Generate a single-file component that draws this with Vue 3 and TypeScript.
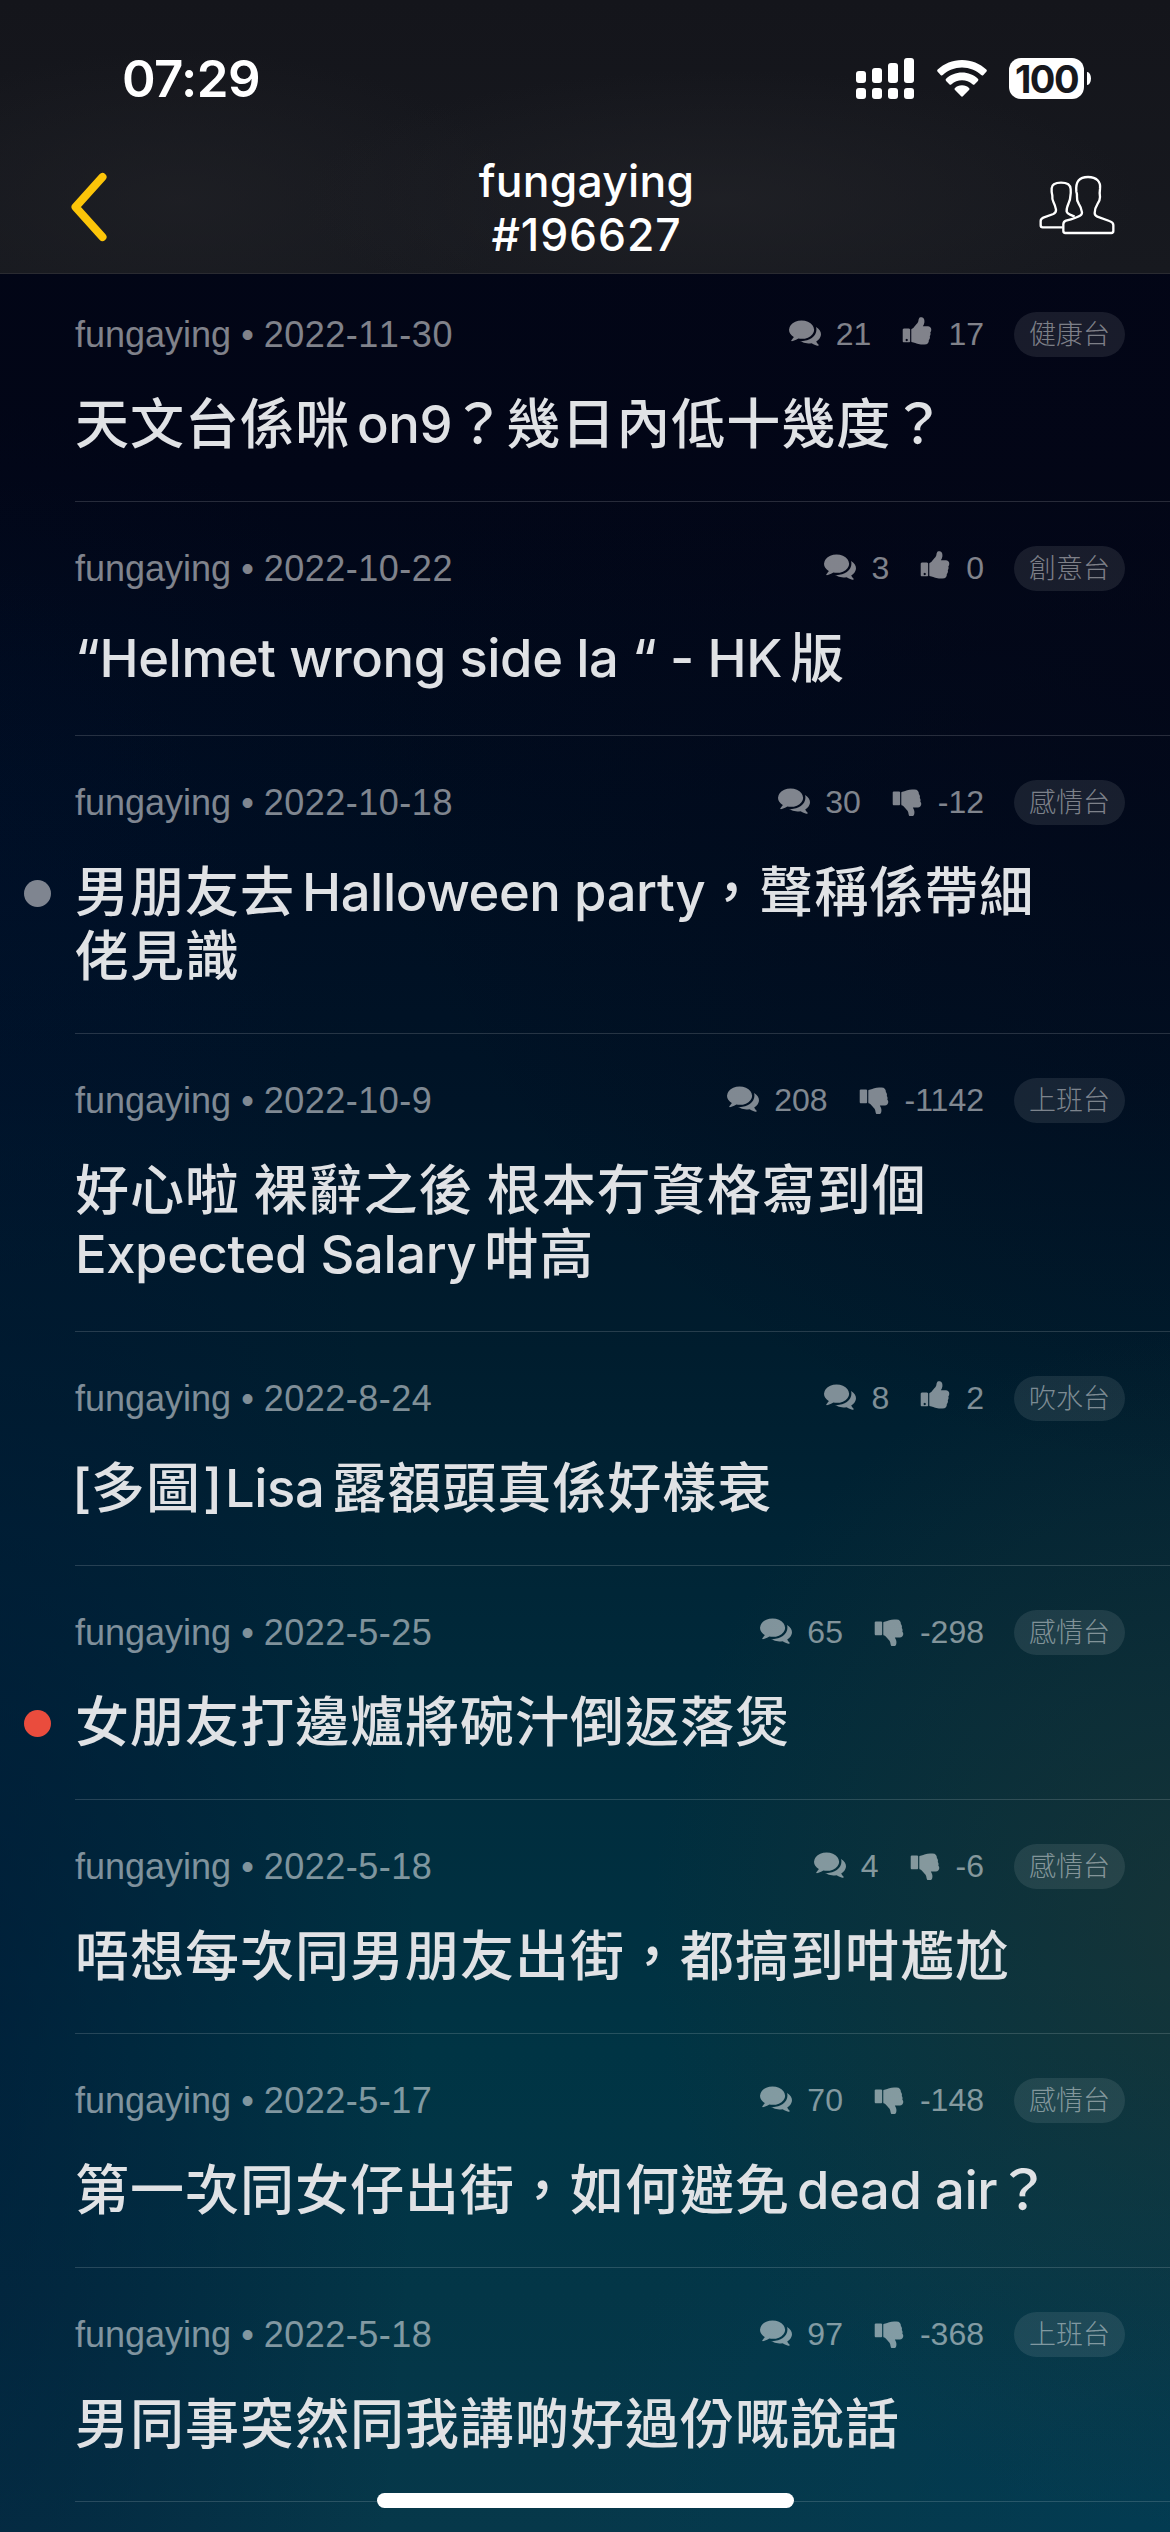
<script setup lang="ts">
type Run = { text: string; kind?: string }
interface Thread {
  date: string
  comments: number
  score: number
  up: boolean
  channel: string
  lines: Run[][]
  marker?: 'grey' | 'red'
}

const author = 'fungaying'
const cjk = (text: string): Run => ({ text })
const lat = (text: string, spacing = ''): Run => ({ text, kind: `latin ${spacing}` })

const threads: Thread[] = [
  { date: '2022-11-30', comments: 21, score: 17, up: true, channel: '健康台', lines: [[cjk('天文台係咪'), lat('on9', 'before after-punct'), cjk('？幾日內低十幾度？')]] },
  { date: '2022-10-22', comments: 3, score: 0, up: true, channel: '創意台', lines: [[lat('“Helmet wrong side la “ - HK', 'after'), cjk('版')]] },
  { date: '2022-10-18', comments: 30, score: -12, up: false, channel: '感情台', marker: 'grey', lines: [[cjk('男朋友去'), lat('Halloween party', 'before after-punct'), cjk('，聲稱係帶細')], [cjk('佬見識')]] },
  { date: '2022-10-9', comments: 208, score: -1142, up: false, channel: '上班台', lines: [[cjk('好心啦 裸辭之後 根本冇資格寫到個')], [lat('Expected Salary', 'after'), cjk('咁高')]] },
  { date: '2022-8-24', comments: 8, score: 2, up: true, channel: '吹水台', lines: [[lat('[', 'open'), cjk('多圖'), lat(']', 'close'), lat('Lisa', 'after'), cjk('露額頭真係好樣衰')]] },
  { date: '2022-5-25', comments: 65, score: -298, up: false, channel: '感情台', marker: 'red', lines: [[cjk('女朋友打邊爐將碗汁倒返落煲')]] },
  { date: '2022-5-18', comments: 4, score: -6, up: false, channel: '感情台', lines: [[cjk('唔想每次同男朋友出街，都搞到咁尷尬')]] },
  { date: '2022-5-17', comments: 70, score: -148, up: false, channel: '感情台', lines: [[cjk('第一次同女仔出街，如何避免'), lat('dead air', 'before after-punct'), cjk('？')]] },
  { date: '2022-5-18', comments: 97, score: -368, up: false, channel: '上班台', lines: [[cjk('男同事突然同我講啲好過份嘅說話')]] },
]
</script>

<template>
  <div class="screen">
    <header class="top">
      <div class="status">
        <span class="time">07:29</span>
        <div class="indicators">
          <svg class="signal" width="58" height="41" viewBox="0 0 58 41" fill="#fff">
            <rect x="0" y="13" width="10" height="12" rx="3" />
            <rect x="16" y="10" width="10" height="15" rx="3" />
            <rect x="32" y="5" width="10" height="20" rx="3" />
            <rect x="48" y="0" width="10" height="25" rx="3" />
            <rect x="0" y="30" width="10" height="11" rx="3" />
            <rect x="16" y="30" width="10" height="11" rx="3" />
            <rect x="32" y="30" width="10" height="11" rx="3" />
            <rect x="48" y="30" width="10" height="11" rx="3" />
          </svg>
          <svg class="wifi" width="50" height="37" viewBox="0 0 50 37" fill="#fff">
            <path d="M25 0C34.500 0 43 3.600 49.300 9.600Q50.400 10.700 49.300 11.800L46.400 14.900Q45.300 16 44.200 15C39 10.300 32.500 7.500 25 7.500S11 10.300 5.800 15Q4.700 16 3.600 14.900L.7 11.800Q-.4 10.700.7 9.600C7 3.600 15.500 0 25 0Z" />
            <path d="M25 12.600C31.200 12.600 36.700 14.900 40.900 18.800Q42 19.900 40.900 21L37.700 24.200Q36.600 25.200 35.500 24.200C32.600 21.700 29 20.200 25 20.200S17.400 21.700 14.500 24.200Q13.400 25.200 12.300 24.200L9.100 21Q8 19.900 9.100 18.800C13.300 14.900 18.800 12.600 25 12.600Z" />
            <path d="M25 25.200C28 25.200 30.200 26.300 32 27.900Q33 28.900 32 30L26.100 36.100Q25 37.200 23.900 36.100L18 30Q17 28.900 18 27.900C19.800 26.300 22 25.200 25 25.200Z" />
          </svg>
          <div class="battery"><span class="cell">100</span><span class="nub"></span></div>
        </div>
      </div>
      <nav class="nav">
        <svg class="back" width="36" height="70" viewBox="0 0 36 70" fill="none" stroke="#fcc509" stroke-width="8" stroke-linecap="round" stroke-linejoin="round">
          <path d="M31.500 5L4.500 35L31.500 65" />
        </svg>
        <div class="heading"><span>{{ author }}</span><span class="number">#196627</span></div>
        <svg class="people" width="100" height="80" viewBox="0 0 300 240" fill="none" stroke="#fff" stroke-width="7" stroke-linejoin="round">
          <path d="M98 187H38Q32 187 32 181V168Q32 162 40 158L70 147Q79 143 78 134Q76 122 70 110Q66 102 67 92Q64 82 65 70Q66 53 93 53Q121 53 122 72Q123 84 121 94Q121 104 116 114Q109 130 110 140Q112 146 120 149L134 155" />
          <path d="M106 204Q100 204 100 198V178Q100 170 108 167Q140 158 150 152Q156 150 156 142Q154 128 146 116Q140 106 141 96Q142 88 139 80C136 50 148 36 174 36S213 50 210 72Q208 84 210 96Q210 108 202 118Q194 130 194 144Q194 151 202 155L238 168Q250 172 250 180V198Q250 204 244 204Z" />
        </svg>
      </nav>
    </header>

    <main class="list">
      <article v-for="(t, i) in threads" :key="i" class="row">
        <div class="meta">
          <span class="byline">{{ author }} • <span class="date">{{ t.date }}</span></span>
          <svg class="icon" viewBox="0 0 1792 1792">
            <path d="M1408 768q0 139-94 257t-256.500 186.500-353.500 68.500q-86 0-176-16-124 88-278 128-36 9-86 16h-3q-11 0-20.500-8t-11.500-21q-1-3-1-6.500t.5-6.500 2-6l2.500-5 3.500-5.500 4-5 4.500-5 4-4.500q5-6 23-25t26-29.500 22.500-29 25-38.500 20.500-44q-124-72-195-177t-71-224q0-139 94-257t256.500-186.500 353.500-68.500 353.500 68.500 256.500 186.500 94 257zm384 256q0 120-71 224.500t-195 176.500q10 24 20.500 44t25 38.500 22.500 29 26 29.500 23 25q1 1 4 4.500t4.500 5 4 5 3.500 5.500l2.500 5 2 6 .5 6.500-1 6.500q-3 14-13 22t-22 7q-50-7-86-16-154-40-278-128-90 16-176 16-271 0-472-132 58 4 88 4 161 0 309-45t264-129q125-92 192-212t67-254q0-77-23-152 129 71 204 178t75 230z" />
          </svg>
          <span class="count">{{ t.comments }}</span>
          <svg v-if="t.up" class="icon vote" viewBox="0 0 1792 1792">
            <path d="M384 1344q0-26-19-45t-45-19-45 19-19 45 19 45 45 19 45-19 19-45zm128-576v640q0 26-19 45t-45 19h-288q-26 0-45-19t-19-45v-640q0-26 19-45t45-19h288q26 0 45 19t19 45zm1184 0q0 86-55 149 15 44 15 76 3 76-43 137 17 56 0 117-15 57-54 94 9 112-49 181-64 76-197 78h-129q-66 0-144-15.500t-121.500-29-120.500-39.500q-123-43-158-44-26-1-45-19.500t-19-44.500v-641q0-25 18-43.500t43-20.500q24-2 76-59t101-121q68-87 101-120 18-18 31-48t17.500-48.500 13.500-60.500q7-39 12.500-61t19.500-52 34-50q19-19 45-19 46 0 82.500 10.500t60 26 40 40.500 24 45 12 50 5 45 .5 39q0 38-9.500 76t-19 60-27.500 56q-3 6-10 18t-11 22-8 24h277q78 0 135 57t57 135z" />
          </svg>
          <svg v-else class="icon vote" viewBox="0 -100 1792 1792">
            <path d="M384 448q0-26-19-45t-45-19-45 19-19 45 19 45 45 19 45-19 19-45zm128 576v-640q0-26-19-45t-45-19h-288q-26 0-45 19t-19 45v640q0 26 19 45t45 19h288q26 0 45-19t19-45zm1129-149q55 61 55 149-1 78-57.500 135t-134.500 57h-277q4 14 8 24t11 22 10 18q18 37 27 57t19 58.500 10 76.500q0 24-.5 39t-5 45-12 50-24 45-40 40.500-60 26-82.500 10.500q-26 0-45-19-20-20-34-50t-19.500-52-12.500-61q-9-42-13.500-60.500t-17.500-48.500-31-48q-33-52-101-120-49-49-101-106t-76-59q-25-2-43-20.500t-18-43.500v-641q0-26 19-44.500t45-19.500q35-1 158-44 77-26 120.500-39.500t121.500-29 144-15.500h129q133 2 197 78 58 69 49 181 39 37 54 94 17 61 0 117 46 61 43 137 0 32-15 76z" />
          </svg>
          <span class="count">{{ t.score }}</span>
          <span class="chip">{{ t.channel }}</span>
        </div>
        <h2 class="title">
          <i v-if="t.marker" class="marker" :class="t.marker"></i>
          <span v-for="(line, l) in t.lines" :key="l" class="line"><span v-for="(run, r) in line" :key="r" :class="run.kind">{{ run.text }}</span></span>
        </h2>
      </article>
    </main>
    <div class="home"></div>
  </div>
</template>

<style>
body {
  background: #01051a;
}
</style>

<style scoped>
.screen {
  position: relative;
  width: 1170px;
  height: 2532px;
  overflow: hidden;
  display: flex;
  flex-direction: column;
  font-family: Inter, 'Noto Sans CJK TC', sans-serif;
  background:
    radial-gradient(ellipse 560px 600px at 1210px 1930px, rgba(38, 54, 48, 0.56), rgba(38, 54, 48, 0) 100%),
    radial-gradient(ellipse 700px 520px at 1250px 2560px, rgba(0, 62, 88, 0.6), rgba(0, 62, 88, 0) 100%),
    radial-gradient(ellipse 460px 1450px at -40px 2000px, rgba(0, 20, 52, 0.6), rgba(0, 20, 52, 0) 100%),
    radial-gradient(ellipse 500px 450px at -60px 850px, rgba(0, 16, 44, 0.35), rgba(0, 16, 44, 0) 100%),
    radial-gradient(ellipse 900px 800px at 1250px 680px, rgba(4, 6, 22, 0.7), rgba(4, 6, 22, 0) 100%),
    linear-gradient(180deg, #020515 0, #020617 480px, #000d20 800px, #001427 1100px, #001d2e 1350px, #002a3b 1700px, #003444 2050px, #06384a 2532px);
}
.top {
  flex: none;
  box-sizing: border-box;
  height: 274px;
  border-bottom: 1px solid #2a2b31;
  background:
    radial-gradient(ellipse 420px 130px at 720px 200px, rgba(34, 35, 40, 0.7), transparent),
    radial-gradient(ellipse 340px 150px at 180px 200px, rgba(32, 33, 38, 0.7), transparent),
    linear-gradient(180deg, #14151b, #17191f);
}
.status {
  height: 156px;
  display: flex;
  align-items: center;
  justify-content: space-between;
  padding: 0 79px 0 122px;
  box-sizing: border-box;
  color: #fff;
}
.time {
  font-size: 51px;
  font-weight: 600;
  letter-spacing: -0.6px;
}
.indicators {
  display: flex;
  align-items: center;
}
.wifi {
  margin-left: 22.500px;
}
.battery {
  display: flex;
  align-items: center;
  margin-left: 22.500px;
}
.cell {
  width: 75px;
  height: 41px;
  border-radius: 12px;
  background: #fff;
  color: #17181d;
  font-size: 38px;
  font-weight: 700;
  line-height: 42px;
  text-align: center;
  letter-spacing: -1.500px;
}
.nub {
  width: 4px;
  height: 13px;
  margin-left: 3px;
  border-radius: 0 4px 4px 0 / 0 7px 7px 0;
  background: #fff;
}
.nav {
  height: 102px;
  display: flex;
  align-items: center;
  justify-content: space-between;
  padding: 0 40px 0 71px;
}
.people {
  margin-bottom: 4px;
}
.heading {
  display: flex;
  flex-direction: column;
  align-items: center;
  margin-left: 36px;
  padding-top: 2px;
  color: #fff;
  font-size: 44.500px;
  font-weight: 500;
  line-height: 54px;
  letter-spacing: 0.2px;
}
.number {
  letter-spacing: 0.9px;
}
.list {
  flex: none;
  margin-top: -6px;
}
.row {
  box-sizing: border-box;
  margin-left: 75px;
  padding: 44px 0;
  border-bottom: 1px solid rgba(255, 255, 255, 0.15);
}
.meta {
  display: flex;
  align-items: center;
  height: 45px;
  margin-right: 45px;
  color: rgba(255, 255, 255, 0.5);
  font-family: 'Liberation Sans', 'Noto Sans CJK TC', sans-serif;
}
.byline {
  flex: 1;
  font-size: 36px;
  line-height: 45px;
}
.date {
  font-kerning: none;
  letter-spacing: 0.5px;
}
.icon {
  width: 32px;
  height: 32px;
  margin: 0 15px 6px 0;
  fill: currentColor;
}
.vote {
  margin-left: 30px;
}
.count {
  font-size: 32px;
  line-height: 45px;
}
.chip {
  box-sizing: border-box;
  width: 111px;
  height: 45px;
  margin-left: 30px;
  border-radius: 23px;
  background: rgba(255, 255, 255, 0.09);
  color: rgba(255, 255, 255, 0.45);
  font-size: 27px;
  line-height: 46px;
  font-weight: 300;
  text-align: center;
}
.title {
  position: relative;
  margin: 36px 0 0;
  color: #e0e2e5;
  font-size: 54px;
  font-weight: 500;
  line-height: 64px;
  letter-spacing: 1px;
  word-spacing: -2px;
}
.line {
  display: block;
  height: 64px;
  white-space: pre;
}
.latin {
  font-size: 52.500px;
  line-height: 1;
  vertical-align: 1px;
  letter-spacing: -0.4px;
  word-spacing: 0;
}
.before {
  margin-left: 7px;
}
.after {
  margin-right: 8px;
}
.after-punct {
  margin-right: -1px;
}
.open {
  margin-left: -3px;
}
.close {
  margin: 0 3px 0 2px;
}
.marker {
  position: absolute;
  left: -51px;
  top: 19px;
  width: 27px;
  height: 27px;
  border-radius: 50%;
}
.grey {
  background: #7f8590;
}
.red {
  background: #ea4c3d;
}
.home {
  position: absolute;
  left: 377px;
  bottom: 24px;
  width: 417px;
  height: 15px;
  border-radius: 8px;
  background: #fff;
}
</style>
